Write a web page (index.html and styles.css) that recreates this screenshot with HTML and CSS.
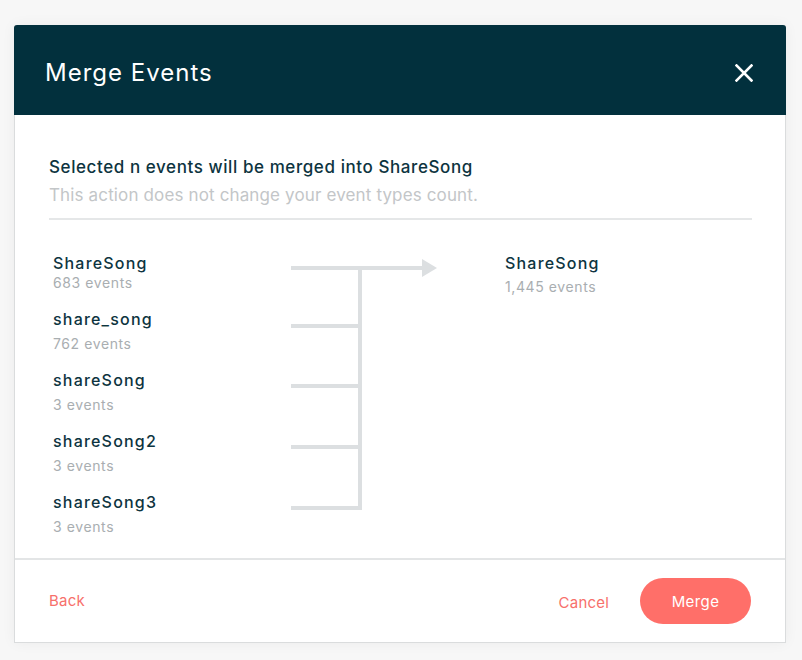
FILE: index.html
```html
<!DOCTYPE html>
<html>
<head>
<meta charset="utf-8">
<link rel="stylesheet" href="styles.css">
</head>
<body>
<div class="modal">
  <div class="modal-header">
    <h1 class="modal-title">Merge Events</h1>
    <button class="close-btn" aria-label="Close">
      <svg width="18" height="18" viewBox="0 0 18 18"><path d="M1.5 1.5 L16.5 16.5 M16.5 1.5 L1.5 16.5" stroke="#ffffff" stroke-width="2.6" stroke-linecap="square" fill="none"/></svg>
    </button>
  </div>
  <div class="modal-body">
    <p class="lead">Selected n events will be merged into ShareSong</p>
    <p class="sub">This action does not change your event types count.</p>
    <div class="divider"></div>
    <div class="merge">
      <div class="sources">
        <div class="event first"><div class="name">ShareSong</div><div class="count">683 events</div></div>
        <div class="event"><div class="name">share_song</div><div class="count">762 events</div></div>
        <div class="event"><div class="name">shareSong</div><div class="count">3 events</div></div>
        <div class="event"><div class="name">shareSong2</div><div class="count">3 events</div></div>
        <div class="event"><div class="name">shareSong3</div><div class="count">3 events</div></div>
      </div>
      <svg class="connector" width="146" height="260" viewBox="0 0 146 260">
        <g fill="#dcdfe1">
          <rect x="0" y="13" width="132" height="4"/>
          <polygon points="131,6 146,15 131,24"/>
          <rect x="67" y="13" width="4" height="244"/>
          <rect x="0" y="71" width="71" height="4"/>
          <rect x="0" y="131" width="71" height="4"/>
          <rect x="0" y="192" width="71" height="4"/>
          <rect x="0" y="253" width="71" height="4"/>
        </g>
      </svg>
      <div class="target">
        <div class="name">ShareSong</div>
        <div class="count">1,445 events</div>
      </div>
    </div>
  </div>
  <div class="modal-footer">
    <a class="link back" href="#">Back</a>
    <div class="actions">
      <a class="link cancel" href="#">Cancel</a>
      <button class="merge-btn">Merge</button>
    </div>
  </div>
</div>
</body>
</html>
```

FILE: styles.css
```css
* { box-sizing: border-box; }
html, body { margin: 0; padding: 0; }
body {
  background: #f7f7f7;
  font-family: Inter, "Open Sans", sans-serif;
  width: 802px;
  height: 660px;
  overflow: hidden;
}
.modal {
  margin: 25px 0 0 14px;
  width: 772px;
  background: #ffffff;
  border: 1px solid #dadcdd;
  border-top: none;
  border-radius: 3px 3px 0 0;
  box-shadow: 0 0 14px rgba(0,0,0,0.05);
}
.modal-header {
  height: 90px;
  background: #02303d;
  border-radius: 3px 3px 0 0;
  display: flex;
  align-items: center;
  justify-content: space-between;
  padding: 0 33px 0 31px;
  margin: 0 -1px;
}
.modal-title {
  margin: 0;
  color: #ffffff;
  font-size: 24px;
  font-weight: 400;
  letter-spacing: 1px;
  line-height: 30px;
  padding-top: 5px;
}
.close-btn {
  background: none;
  border: none;
  padding: 0;
  width: 18px;
  height: 18px;
  display: flex;
  margin-top: 6px;
}
.modal-body {
  padding: 41px 33px 21px 34px;
}
.lead {
  margin: 0;
  font-size: 17px;
  line-height: 22px;
  font-weight: 500;
  color: #0d3440;
  letter-spacing: 0.58px;
}
.sub {
  margin: 6px 0 0 0;
  font-size: 17px;
  line-height: 22px;
  color: #c3c6c8;
  letter-spacing: 0.14px;
}
.divider {
  margin-top: 12px;
  height: 2px;
  background: #e5e7e8;
}
.merge {
  display: flex;
  align-items: flex-start;
  margin-top: 33px;
  padding-left: 4px;
}
.sources {
  width: 238px;
  display: flex;
  flex-direction: column;
  gap: 16px;
}
.name {
  font-size: 16px;
  line-height: 20px;
  font-weight: 500;
  color: #0d3440;
  letter-spacing: 1.2px;
}
.count {
  font-size: 14px;
  line-height: 20px;
  color: #a9aeb1;
  letter-spacing: 0.6px;
  margin-top: 5px;
}
.event.first .count { margin-top: 0; }
.connector { flex: none; }
.target {
  margin-left: 68px;
}
.target .count { margin-top: 4px; }
.modal-footer {
  border-top: 2px solid #e3e5e6;
  height: 84px;
  display: flex;
  align-items: center;
  justify-content: space-between;
  padding: 0 34px 0 34px;
}
.link {
  color: #f7706b;
  text-decoration: none;
  font-size: 15px;
  letter-spacing: 0.2px;
}
.back { margin-top: -2px; }
.actions {
  display: flex;
  align-items: center;
  gap: 31px;
}
.cancel { margin-top: 3px; }
.merge-btn {
  width: 111px;
  height: 46px;
  border: none;
  border-radius: 23px;
  background: #ff6f69;
  color: #ffffff;
  font-family: inherit;
  font-size: 15px;
  letter-spacing: 0.4px;
  padding: 0;
}
```
